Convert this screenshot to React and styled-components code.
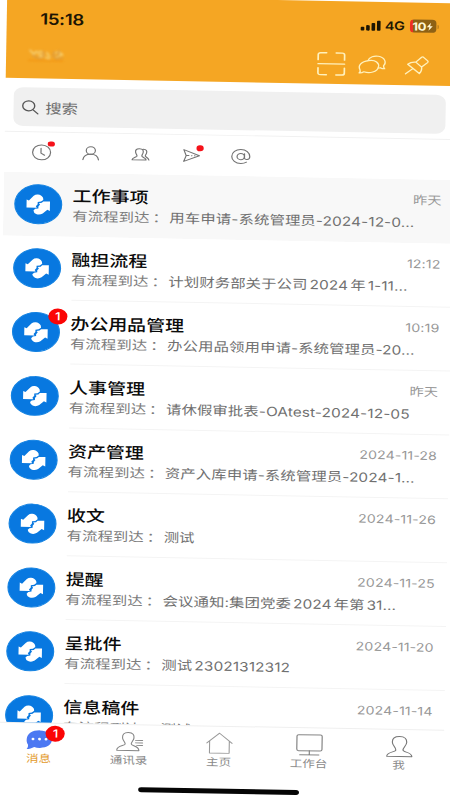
import React from 'react';
import styled, { createGlobalStyle } from 'styled-components';

const Global = createGlobalStyle`
  * { box-sizing: border-box; }
  html, body { margin: 0; background: #fff; overflow: hidden; }
  body { font-family: Inter, "Noto Sans CJK SC", sans-serif; }
  svg { display: block; overflow: visible; }
`;

const Viewport = styled.div`
  width: 450px;
  height: 800px;
  overflow: hidden;
  background: #fff;
`;

const Phone = styled.div`
  width: 375px;
  height: 812px;
  display: flex;
  flex-direction: column;
  transform-origin: 0 0;
  transform: matrix(1.2, 0.0222, -0.0179, 0.998, 7.2, -5);
  background: #fff;
`;

const Header = styled.header`
  height: 83px;
  flex: none;
  background: #f5a623;
`;

const StatusBar = styled.div`
  height: 47px;
  display: flex;
  align-items: center;
  padding: 0 15px 0 28px;
  color: #1c1503;
`;

const Clock = styled.span`
  flex: 1;
  font-size: 15.5px;
  font-weight: 600;
  letter-spacing: -0.3px;
`;

const Network = styled.span`
  font-size: 12px;
  font-weight: 600;
  margin: 0 4px 0 3.5px;
  letter-spacing: -0.3px;
`;

const Battery = styled.span`
  width: 22px;
  height: 12.5px;
  border-radius: 3.5px;
  display: flex;
  align-items: center;
  justify-content: center;
  gap: 0.5px;
  background: linear-gradient(90deg, #ee3022 0 2.6px, #8e6114 2.6px);
  color: #fff7d6;
  font-size: 11px;
  font-weight: 700;
  letter-spacing: -0.4px;
`;

const BatteryTip = styled.span`
  width: 1.5px;
  height: 4px;
  margin-left: 1px;
  border-radius: 0 2px 2px 0;
  background: #b57a1b;
`;

const TitleBar = styled.div`
  height: 32px;
  display: flex;
  align-items: center;
  padding: 0 23px 0 18px;
`;

const Brand = styled.div`
  flex: 1;
  margin-top: -6px;
`;

const Actions = styled.div`
  display: flex;
  align-items: center;
  gap: 12px;
`;

const PinSlot = styled.div`
  margin-left: 5px;
`;

const SearchArea = styled.div`
  height: 54px;
  flex: none;
  padding: 9px 8px 0 7px;
  border-bottom: 1px solid #f1f1f1;
`;

const SearchBox = styled.div`
  height: 39px;
  display: flex;
  align-items: center;
  gap: 6.5px;
  padding-left: 6.5px;
  border-radius: 8px;
  background: #f0f0f0;
  color: #6c6c6c;
  font-size: 13.6px;
`;

const Filters = styled.nav`
  height: 40px;
  flex: none;
  display: flex;
  align-items: center;
  padding-left: 10px;
`;

const Filter = styled.div`
  width: 41.6px;
  display: flex;
  justify-content: center;
`;

const IconHolder = styled.div`
  position: relative;
`;

const Dot = styled.i`
  position: absolute;
  top: -3.5px;
  right: -3px;
  width: 5.6px;
  height: 5.6px;
  border-radius: 50%;
  background: #f5121a;
`;

const List = styled.main`
  height: 551px;
  flex: none;
  overflow: hidden;
`;

const Row = styled.article`
  height: 64px;
  display: flex;
  align-items: center;
  padding-left: 9px;
  background: ${(p) => (p.$pinned ? '#f8f8f8' : '#fff')};
`;

const Avatar = styled.div`
  position: relative;
  width: 40px;
  height: 40px;
  flex: none;
  border-radius: 50%;
  border: 1px solid #1583e2;
  background: #0878e0;
  display: flex;
  align-items: center;
  justify-content: center;
`;

const Badge = styled.span`
  position: absolute;
  top: ${(p) => p.$top}px;
  right: ${(p) => p.$right}px;
  width: 16px;
  height: 16px;
  border-radius: 50%;
  background: #fb0505;
  color: #fff;
  font-size: 11px;
  line-height: 16px;
  font-weight: 500;
  text-align: center;
`;

const Content = styled.div`
  flex: 1;
  min-width: 0;
  height: 64px;
  margin-left: 8.5px;
  padding: 11px 10px 0 0;
  border-bottom: 1px solid ${(p) => (p.$pinned ? 'transparent' : '#f4f4f4')};
`;

const TitleLine = styled.div`
  height: 24px;
  display: flex;
  justify-content: space-between;
`;

const Title = styled.h2`
  margin: 0;
  font-size: 15.8px;
  line-height: 26px;
  font-weight: 500;
  color: #0b0b0b;
  white-space: nowrap;
`;

const Time = styled.time`
  font-size: 11.8px;
  line-height: 20px;
  letter-spacing: 0.1px;
  color: #979797;
`;

const Summary = styled.div`
  display: flex;
  height: 18px;
  line-height: 18px;
  font-size: 12.8px;
  letter-spacing: 0.1px;
  word-spacing: -2px;
  white-space: pre;
  color: #707070;
`;

const Prefix = styled.span`
  width: 81px;
  flex: none;
  color: #7c7c7c;
`;

const Colon = styled.span`
  margin-left: 2.5px;
`;

const TabBar = styled.footer`
  height: 58px;
  flex: none;
  display: flex;
  border-top: 1px solid #efefef;
`;

const Tab = styled.div`
  width: 75px;
  display: flex;
  flex-direction: column;
  align-items: center;
  color: ${(p) => (p.$active ? '#e39a2c' : '#8a8a8a')};
  font-size: 10.4px;
  line-height: 14px;
`;

const TabIcon = styled.div`
  position: relative;
  height: 25px;
  display: flex;
  align-items: center;
  margin-top: 4.3px;
`;

const HomeIndicator = styled.div`
  width: 134px;
  height: 4.5px;
  margin: 5px auto 0;
  border-radius: 3px;
  background: #050505;
`;

const Line = ({ w, h, box, color = '#737373', sw = 1, children }) => (
  <svg width={w} height={h} viewBox={box || `0 0 ${w} ${h}`} fill="none" stroke={color}
    strokeWidth={sw} strokeLinecap="round" strokeLinejoin="round">{children}</svg>
);

const Signal = () => (
  <svg width="17" height="10" viewBox="0 0 17 10" fill="#1c1503">
    <rect x="0" y="6.2" width="3" height="3.8" rx=".8" />
    <rect x="4.5" y="4.5" width="3" height="5.5" rx=".8" />
    <rect x="9" y="2.3" width="3" height="7.7" rx=".8" />
    <rect x="13.5" y="0" width="3" height="10" rx=".8" />
  </svg>
);

const BlurGroup = styled.g`
  filter: blur(0.8px);
`;

const BrandMark = () => (
  <svg width="31" height="14" viewBox="0 0 31 14">
    <BlurGroup fill="none" strokeLinecap="round">
      <path d="M2 2l3 4 2-3M8 4l3-1 2 2M9 6l4 1-3 2M16 4l2 4M15 9l3 1M23 4l3-1 3 3M24 8l4-2" stroke="#f6cf70" strokeWidth="1.6" />
      <path d="M4 7l3 2 4 1M13 3v6M22 3l-1 4 3 3 5-1M26 2l-1 5" stroke="#dd9b3c" strokeWidth="1.5" />
      <path d="M1 12h28" stroke="#f39a16" strokeWidth="2" />
    </BlurGroup>
  </svg>
);

const cream = '#fff1bd';

const ScanIcon = () => (
  <Line w={22} h={22} color={cream} sw={1.4}>
    <path d="M0 7V2Q0 0 2 0H7M15 0h5q2 0 2 2v5M22 15v5q0 2-2 2h-5M7 22H2q-2 0-2-2v-5M0 11h22" />
  </Line>
);

const ChatsIcon = () => (
  <Line w={22} h={18} color={cream} sw={1.15}>
    <path d="M8 5C14 3.7 17.200 7.500 16.300 11.300C15.500 16.500 9 18 4.200 16.300C3 17.300 1.500 17.700.3 17.500C1.300 16.500 1.500 15.500 1 14.300C-1 10 2 6 8 5Z" />
    <path d="M7.500 5C8.500 1 13 0 16 .5C21.500 1.300 23.300 6.500 20.600 9.800C20.400 11 20.800 12 21.600 12.900C20 13 18.700 12.500 17.800 11.900C17.300 12.100 16.900 12.200 16.200 12.200" />
  </Line>
);

const PinIcon = () => (
  <Line w={19} h={19} color={cream} sw={1.2}>
    <path d="M13.200.7Q14 0 14.800.7L18.300 4.200Q19 5 18.200 5.900L13.300 10.500Q13.800 14.500 11.500 17L1.700 8Q4.500 5.300 8.400 5.700ZM8.400 5.700L13.300 10.500M6 12.200L0 17.500" />
  </Line>
);

const SearchIcon = () => (
  <Line w={13.500} h={14} color="#555" sw={1.15}>
    <circle cx="5.600" cy="5.600" r="5" /><path d="M9.300 9.500l4 4" />
  </Line>
);

const ClockIcon = () => (
  <Line w={16} h={16}><circle cx="8" cy="8" r="7.500" /><path d="M7.500 3.800v5l3 2" /></Line>
);

const PersonIcon = () => (
  <Line w={14} h={14}><circle cx="7" cy="4.200" r="3.800" /><path d="M.5 13.500C1 9.800 3.600 8 7 8s6 1.800 6.500 5.500" /></Line>
);

const PeopleIcon = () => (
  <Line w={15} h={13}>
    <path d="M6.500.5C3.500.5 3 2.500 3.400 4.500C3.700 6 4.700 6.800 4.500 8C4.200 9.200.5 9.500.5 11.800H12.200C12.200 9.500 8.900 9.200 8.600 8C8.400 6.800 9.300 6 9.600 4.500C10 2.500 9.500.5 6.500.5ZM9.500.9C12.500.7 13 3 12.400 5C12 6.300 11.200 7 11.500 8C12 9 14 9.300 14.500 11.700" />
  </Line>
);

const SendIcon = () => (
  <Line w={14} h={13}>
    <path d="M.5.6L13.500 6.500L.5 12.400L2.500 6.500ZM2.800 6.500h2M7 6.500h.3M9.500 6.500h.3" />
  </Line>
);

const AtIcon = () => (
  <Line w={16} h={15}>
    <circle cx="8" cy="7.500" r="3.100" />
    <path d="M11.100 4.500v4c0 3 4.400 2.400 4.400-1C15.500 3.500 12.200.5 8 .5S.5 3.500.5 7.500S3.800 14.500 8 14.500c2 0 3.500-.5 4.800-1.500" />
  </Line>
);

const FlowIcon = () => (
  <svg width="20" height="20.5" viewBox="0 0 24 21" preserveAspectRatio="none" fill="#fff">
    <path d="M.3 5.500L2.600 6.500L7.300 1.700Q9.200 0 11.500.2Q15 .3 16.700 3.600L17 5.700L14.700 7.500L11.400 7.900V10.200L9.600 12.300L10.600 13.800H.3Z" />
    <path d="M23.700 7.200V16.900L21.200 15.700L16.600 19.600Q13.500 21.700 10 20.300Q7.500 19 7.300 16.700L9 15L12.200 14.500V12.500L13.800 10.500L12.500 9.200L15.500 8.700L17 7.300Z" />
  </svg>
);

const MessageIcon = () => (
  <svg width="21.500" height="19.500" viewBox="0 0 23 20" preserveAspectRatio="none">
    <path d="M12 0C18.500 0 23 3.800 23 9s-4.500 9-11 9c-1.800 0-3.300-.2-4.800-.8C5.200 18.500 2.800 19.300.5 19.500C1.500 18 2 16.500 1.500 14.500C.5 13 .2 11 .4 9C.8 3.600 5.500 0 12 0Z" fill="#4c78f2" />
    <g fill="#fff"><circle cx="6" cy="9" r="1.300" /><circle cx="11.800" cy="9" r="1.300" /><circle cx="17.600" cy="9" r="1.300" /></g>
  </svg>
);

const ContactsIcon = () => (
  <Line w={22} h={19} color="#858585" sw={0.9}>
    <path d="M10 .5C6 .5 5 3 5.200 6C5.400 8.500 7.500 10 7.500 12C7.500 14 .5 13.500.5 18.500H19C19 13.500 12.500 14 12.500 12C12.500 10 14.500 8.500 14.700 6C15 3 14 .5 10 .5ZM16 8.200h6M16 10.700h6M17 13.200h5" />
  </Line>
);

const HomeIcon = () => (
  <Line w={22} h={21} color="#9a9a9a" sw={0.9}><path d="M.5 10.500L11 .5L21.500 10.500M2.800 8.500V20.500H19.200V8.500" /></Line>
);

const DeskIcon = () => (
  <Line w={22} h={21} color="#858585"><rect x=".5" y=".5" width="21" height="16" rx="1.500" /><path d="M11 16.500v4M3 20.500h16" /></Line>
);

const MeIcon = () => (
  <Line w={22} h={21} color="#777" sw={0.95}>
    <path d="M11 .5C6.500.5 5 3 5 6C5 9.500 8 11.500 8 14C8 16.500.8 15.500.5 20.500H21.500C21.200 15.500 14 16.500 14 14C14 11.500 17 9.500 17 6C17 3 15.500.5 11 .5Z" />
  </Line>
);

const filters = [
  { Icon: ClockIcon, dot: true },
  { Icon: PersonIcon },
  { Icon: PeopleIcon },
  { Icon: SendIcon, dot: true },
  { Icon: AtIcon },
];

const messages = [
  { title: '工作事项', detail: '用车申请-系统管理员-2024-12-0...', time: '昨天', pinned: true },
  { title: '融担流程', detail: '计划财务部关于公司 2024 年 1-11...', time: '12:12' },
  { title: '办公用品管理', detail: '办公用品领用申请-系统管理员-20...', time: '10:19', badge: 1 },
  { title: '人事管理', detail: '请休假审批表-OAtest-2024-12-05', time: '昨天' },
  { title: '资产管理', detail: '资产入库申请-系统管理员-2024-1...', time: '2024-11-28' },
  { title: '收文', detail: '测试', time: '2024-11-26' },
  { title: '提醒', detail: '会议通知:集团党委 2024 年第 31...', time: '2024-11-25' },
  { title: '呈批件', detail: '测试 23021312312', time: '2024-11-20' },
  { title: '信息稿件', detail: '测试', time: '2024-11-14' },
];

const tabs = [
  { label: '消息', Icon: MessageIcon, active: true, badge: 1 },
  { label: '通讯录', Icon: ContactsIcon },
  { label: '主页', Icon: HomeIcon },
  { label: '工作台', Icon: DeskIcon },
  { label: '我', Icon: MeIcon },
];

export default function App() {
  return (
    <Viewport>
      <Global />
      <Phone>
        <Header>
          <StatusBar>
            <Clock>15:18</Clock>
            <Signal />
            <Network>4G</Network>
            <Battery>
              10
              <svg width="5" height="8" viewBox="0 0 5 8" fill="currentColor"><path d="M3.500 0L0 4.500H2.200L1.500 8L5 3.500H2.800Z" /></svg>
            </Battery>
            <BatteryTip />
          </StatusBar>
          <TitleBar>
            <Brand><BrandMark /></Brand>
            <Actions><ScanIcon /><ChatsIcon /><PinSlot><PinIcon /></PinSlot></Actions>
          </TitleBar>
        </Header>
        <SearchArea>
          <SearchBox><SearchIcon />搜索</SearchBox>
        </SearchArea>
        <Filters>
          {filters.map(({ Icon, dot }, i) => (
            <Filter key={i}><IconHolder><Icon />{dot && <Dot />}</IconHolder></Filter>
          ))}
        </Filters>
        <List>
          {messages.map((m) => (
            <Row key={m.title} $pinned={m.pinned}>
              <Avatar>
                <FlowIcon />
                {m.badge && <Badge $top={-5} $right={-7}>{m.badge}</Badge>}
              </Avatar>
              <Content $pinned={m.pinned}>
                <TitleLine><Title>{m.title}</Title><Time>{m.time}</Time></TitleLine>
                <Summary><Prefix>有流程到达<Colon>：</Colon></Prefix><span>{m.detail}</span></Summary>
              </Content>
            </Row>
          ))}
        </List>
        <TabBar>
          {tabs.map(({ label, Icon, active, badge }) => (
            <Tab key={label} $active={active}>
              <TabIcon>
                <Icon />
                {badge && <Badge $top={-2.5} $right={-11}>{badge}</Badge>}
              </TabIcon>
              {label}
            </Tab>
          ))}
        </TabBar>
        <HomeIndicator />
      </Phone>
    </Viewport>
  );
}
